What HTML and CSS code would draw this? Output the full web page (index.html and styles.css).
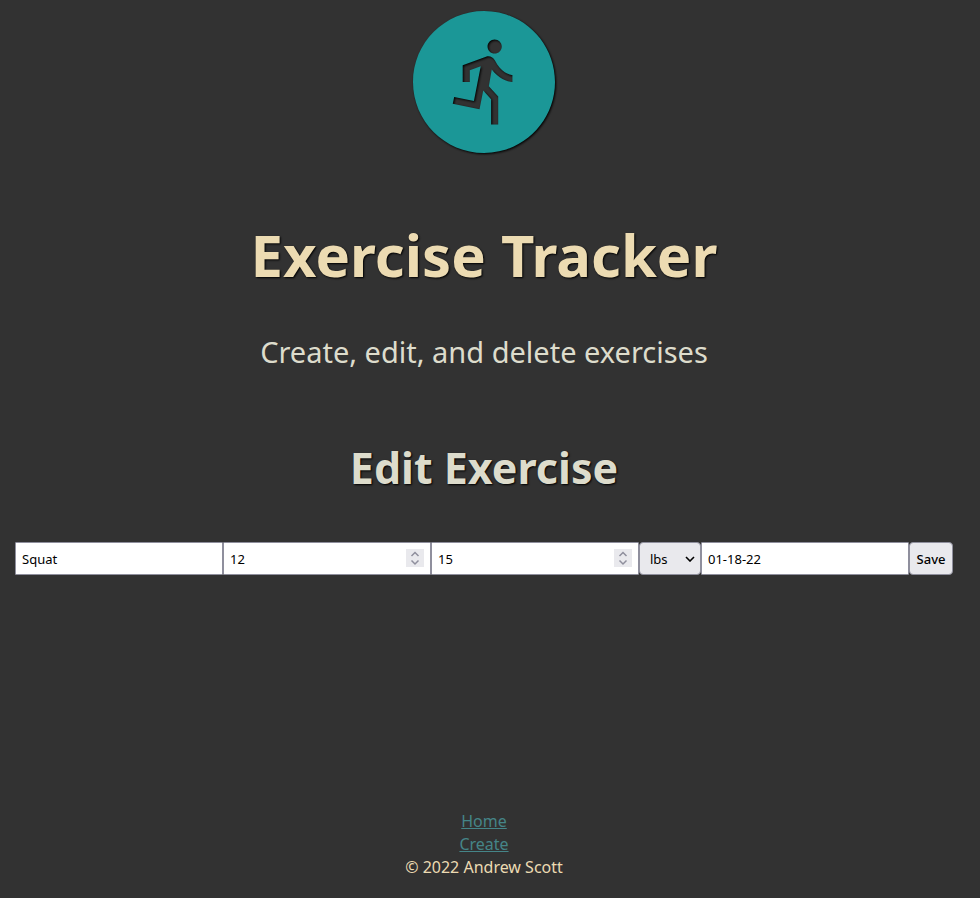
FILE: index.html
```html
<!DOCTYPE html>
<html lang="en">
<head>
<meta charset="utf-8">
<title>Exercise Tracker</title>
<link rel="stylesheet" href="styles.css">
</head>
<body>
<header class="header">
  <svg class="logo" viewBox="2 2 20 20" aria-hidden="true">
    <path fill-rule="evenodd" d="M12 2C6.48 2 2 6.48 2 12s4.48 10 10 10 10-4.48 10-10S17.52 2 12 2zM13.5 6c.55 0 1 .45 1 1s-.45 1-1 1-1-.45-1-1 .45-1 1-1zM16 12c-.7 0-2.01-.54-2.91-1.76l-.41 2.35L14 14.03V18h-1v-3.58l-1.11-1.21-.52 2.64-3.77-.77.2-.98 2.78.57.96-4.89-1.54.57V12H9V9.65l3.28-1.21c.49-.18 1.03.06 1.26.53.83 1.7 2.05 2.03 2.46 2.03v1z"/>
  </svg>
  <h1>Exercise Tracker</h1>
  <p>Create, edit, and delete exercises</p>
</header>
<main class="main">
  <h2>Edit Exercise</h2>
  <form class="form">
    <input class="field" type="text" value="Squat" aria-label="Name">
    <span class="control">
      <input class="field" type="number" value="12" aria-label="Reps">
      <svg class="spinner" viewBox="0 0 18 18" aria-hidden="true"><path d="M5.500 7l3.500-3.500 3.500 3.500M5.500 11.500l3.500 3.500 3.500-3.500"/></svg>
    </span>
    <span class="control">
      <input class="field" type="number" value="15" aria-label="Weight">
      <svg class="spinner" viewBox="0 0 18 18" aria-hidden="true"><path d="M5.500 7l3.500-3.500 3.500 3.500M5.500 11.500l3.500 3.500 3.500-3.500"/></svg>
    </span>
    <span class="control">
      <select class="unit" aria-label="Unit"><option>lbs</option><option>kgs</option></select>
      <svg class="arrow" viewBox="0 0 10 6" aria-hidden="true"><path d="M1 1l4 4 4-4"/></svg>
    </span>
    <input class="field" type="text" value="01-18-22" aria-label="Date">
    <button class="save" type="button">Save</button>
  </form>
</main>
<footer class="footer">
  <a href="#home">Home</a>
  <a href="#create">Create</a>
  <span>© 2022 Andrew Scott</span>
</footer>
</body>
</html>
```
FILE: styles.css
```css
* {
  box-sizing: border-box;
}

body {
  display: flex;
  flex-direction: column;
  min-height: 100vh;
  margin: 0;
  padding: 11px 12px 19px 0;
  background: #323232;
  color: #ecdbb2;
  font: 16px/23px "Noto Sans", sans-serif;
  text-align: center;
}

.logo {
  display: block;
  width: 142px;
  margin: 0 auto;
  fill: #1b9797;
  overflow: visible;
  filter: drop-shadow(1px 1px 1px #000);
}

h1,
h2,
p {
  margin: 0;
}

h1 {
  margin-top: 62px;
  font-size: 58px;
  line-height: 80px;
  text-shadow: 1px 1px 2px #000;
}

p {
  margin-top: 37px;
  color: #dddccc;
  font-size: 29px;
  line-height: 40px;
}

h2 {
  margin-top: 66px;
  color: #dddccc;
  font-size: 43px;
  line-height: 60px;
  text-shadow: 1px 1px 2px #000;
}

.form {
  display: flex;
  justify-content: center;
  margin: 44px 15px 0;
}

.control {
  position: relative;
  display: flex;
}

.field,
.unit,
.save {
  height: 33px;
  margin: 0;
  border: 1px solid #8f8f9d;
  border-radius: 1px;
  padding: 1px 6px 0;
  background: #fff;
  color: #000;
  font: 13px "Noto Sans", sans-serif;
}

.field {
  width: 208px;
  appearance: textfield;
}

.field::-webkit-inner-spin-button {
  appearance: none;
}

.unit,
.save {
  border-radius: 4px;
  background: #e9e9ed;
}

.unit {
  width: 62px;
  padding-left: 10px;
  appearance: none;
}

.save {
  width: 44px;
  padding: 1px 0 0;
  font-weight: 500;
}

.spinner,
.arrow {
  position: absolute;
  fill: none;
  pointer-events: none;
}

.spinner {
  top: 7px;
  right: 7px;
  width: 18px;
  height: 18px;
  background: #e9e9ed;
  stroke: #8f8f9d;
  stroke-width: 1.5;
}

.arrow {
  top: 14px;
  right: 6px;
  width: 10px;
  height: 6px;
  stroke: #000;
  stroke-width: 1.6;
}

.footer {
  display: flex;
  flex-direction: column;
  align-items: center;
  margin-top: auto;
}

.footer a {
  color: #458588;
}
```
